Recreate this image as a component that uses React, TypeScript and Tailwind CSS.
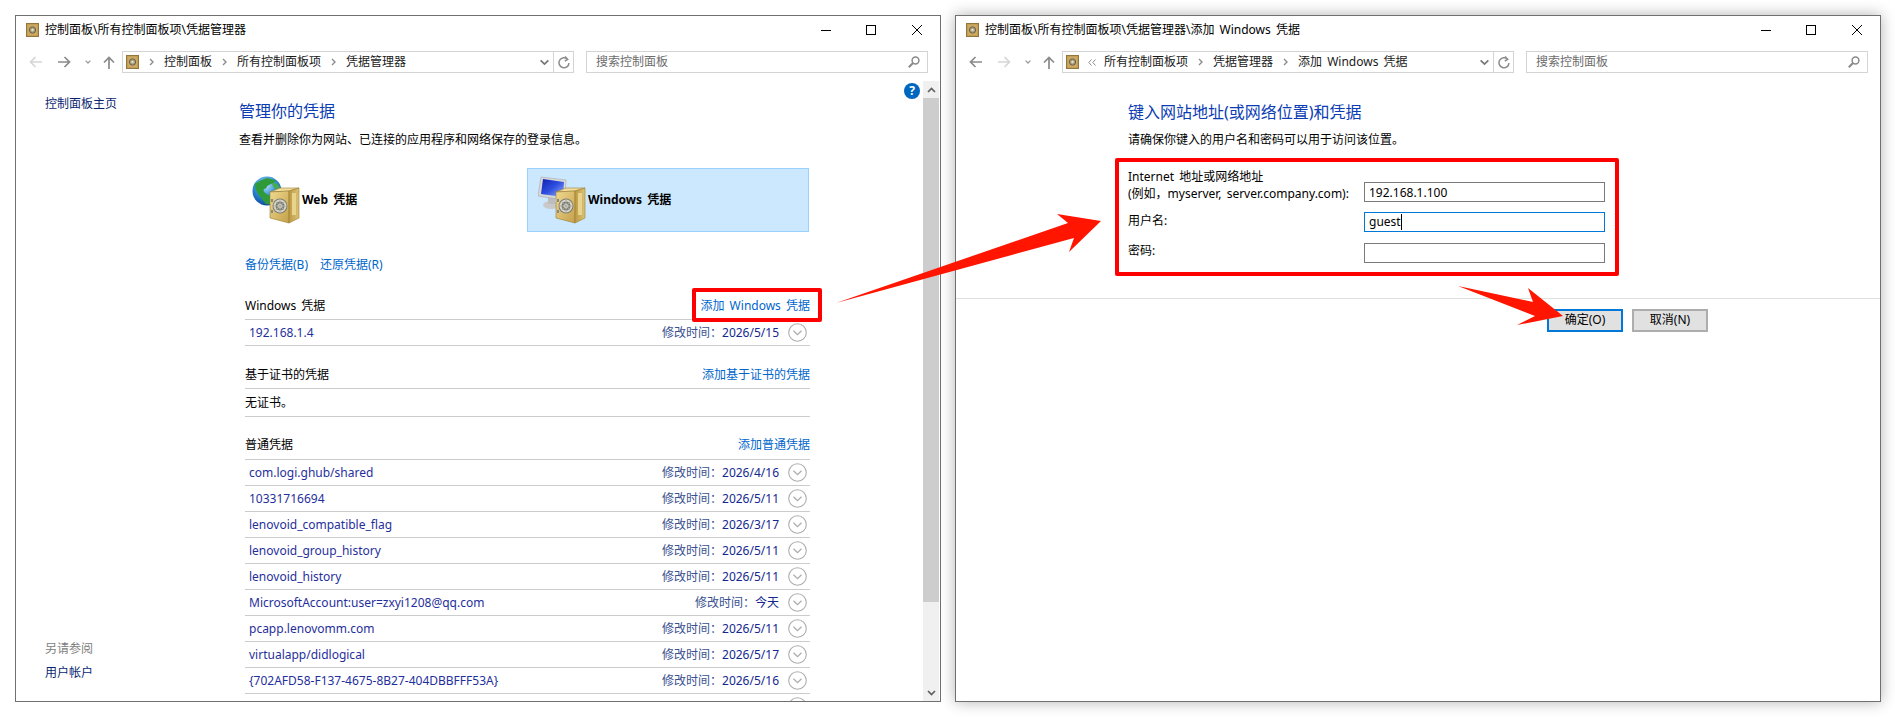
import React from "react";

const COLON = "\uFF1A";
const COMMA = "\uFF0C";

const rows: [string, string][] = [
  ["com.logi.ghub/shared", "2026/4/16"],
  ["10331716694", "2026/5/11"],
  ["lenovoid_compatible_flag", "2026/3/17"],
  ["lenovoid_group_history", "2026/5/11"],
  ["lenovoid_history", "2026/5/11"],
  ["MicrosoftAccount:user=zxyi1208@qq.com", "今天"],
  ["pcapp.lenovomm.com", "2026/5/11"],
  ["virtualapp/didlogical", "2026/5/17"],
  ["{702AFD58-F137-4675-8B27-404DBBFFF53A}", "2026/5/16"],
  ["", ""],
];

function SmallSafe() {
  return (
    <svg width="13" height="14" viewBox="0 0 13 14" className="shrink-0">
      <rect x="0.5" y="0.5" width="12" height="13" fill="#b8934a" stroke="#94763a" />
      <rect x="1.5" y="1.5" width="10" height="11" fill="#cdaa63" />
      <circle cx="6.5" cy="7" r="3.2" fill="#a89c78" stroke="#6e6446" />
      <circle cx="6.5" cy="7" r="1.2" fill="#e6e2d2" />
    </svg>
  );
}

function SafeBody() {
  return (
    <g>
      <polygon points="18,17 28,13 47,13 37,16" fill="#f2dfa0" stroke="#9a7c30" strokeWidth="0.6" />
      <polygon points="18,17 37,16 37,48 18,43" fill="url(#goldFront)" stroke="#9a7c30" strokeWidth="0.6" />
      <polygon points="37,16 47,13 47,43 37,48" fill="url(#goldSide)" stroke="#9a7c30" strokeWidth="0.6" />
      <rect x="40" y="18" width="4" height="22" fill="#e9d48d" />
      <circle cx="28" cy="31" r="7.5" fill="#7d7d72" />
      <circle cx="28" cy="31" r="5.5" fill="none" stroke="#d6d6cc" strokeWidth="2" />
      <circle cx="28" cy="31" r="2.5" fill="#d9d9d2" />
      <path d="M28 24v14M21 31h14M23 26l10 10M33 26l-10 10" stroke="#a9a99e" strokeWidth="0.8" />
      <rect x="19" y="24" width="2" height="3" fill="#888" />
      <rect x="19" y="35" width="2" height="3" fill="#888" />
    </g>
  );
}

function Defs() {
  return (
    <defs>
      <linearGradient id="goldFront" x1="0" y1="0" x2="1" y2="1">
        <stop offset="0" stopColor="#efd98f" />
        <stop offset="1" stopColor="#c4a04a" />
      </linearGradient>
      <linearGradient id="goldSide" x1="0" y1="0" x2="1" y2="0">
        <stop offset="0" stopColor="#bd9a44" />
        <stop offset="1" stopColor="#dcc274" />
      </linearGradient>
      <radialGradient id="globeFill" cx="0.45" cy="0.3" r="0.75">
        <stop offset="0" stopColor="#bfe6fa" />
        <stop offset="0.5" stopColor="#2f8fd6" />
        <stop offset="1" stopColor="#0c3f96" />
      </radialGradient>
      <linearGradient id="screenFill" x1="0" y1="0" x2="1" y2="1">
        <stop offset="0" stopColor="#0d1fb0" />
        <stop offset="0.5" stopColor="#2f4fe0" />
        <stop offset="1" stopColor="#9ab4f5" />
      </linearGradient>
    </defs>
  );
}

function WebIcon() {
  return (
    <svg width="48" height="50" viewBox="0 0 48 50" className="shrink-0 ml-[10px]">
      <Defs />
      <circle cx="15" cy="16" r="14.5" fill="url(#globeFill)" />
      <path d="M3 9c4-3 8-5 12-6 3 1 6 1 9 3-2 3-5 2-7 4-3 1-2 4-5 4-2 3 3 5 6 7 3 1 4 4 7 4-3 4-7 5-11 4-3-3-5-7-8-10-2-3-3-6-3-10z" fill="#2f9a3a" />
      <path d="M20 8c2 0 5 0 7 3 1 2 1 4 0 5-2-1-4-2-5-4-1-1-2-2-2-4z" fill="#45ad4c" />
      <SafeBody />
    </svg>
  );
}

function WinIcon() {
  return (
    <svg width="48" height="50" viewBox="0 0 48 50" className="shrink-0 ml-[10px]">
      <Defs />
      <ellipse cx="13" cy="30" rx="8" ry="4" fill="#c9c9c9" />
      <rect x="10" y="23" width="7" height="6" fill="#bdbdbd" />
      <polygon points="3,2 28,5 27,25 0,21" fill="#d8d8d8" stroke="#9c9c9c" strokeWidth="0.5" />
      <polygon points="5,4 26,7 25,22 3,19" fill="url(#screenFill)" />
      <SafeBody />
    </svg>
  );
}

function Back({ on }: { on: boolean }) {
  const c = on ? "#8a8a8a" : "#d6d6d6";
  return (
    <svg width="13" height="12" viewBox="0 0 13 12" fill="none" stroke={c} strokeWidth="1.7" className="shrink-0">
      <path d="M13 6H1.5M6.5 1L1.5 6l5 5" />
    </svg>
  );
}
function Forward({ on }: { on: boolean }) {
  const c = on ? "#8a8a8a" : "#d6d6d6";
  return (
    <svg width="13" height="12" viewBox="0 0 13 12" fill="none" stroke={c} strokeWidth="1.7" className="shrink-0">
      <path d="M0 6h11.5M6.5 1l5 5-5 5" />
    </svg>
  );
}
function Chevron({ w = 7, c = "#9a9a9a", sw = 1.5 }: { w?: number; c?: string; sw?: number }) {
  return (
    <svg width={w} height={w - 2} viewBox="0 0 7 5" fill="none" stroke={c} strokeWidth={sw} className="shrink-0">
      <path d="M0.5 0.8L3.5 3.8L6.5 0.8" />
    </svg>
  );
}

function NavGroup({ back, forward }: { back: boolean; forward: boolean }) {
  return (
    <div className="flex items-center pl-[13px] w-[106px] shrink-0">
      <Back on={back} />
      <div className="w-[16px]" />
      <Forward on={forward} />
      <div className="w-[14px]" />
      <Chevron w={6} />
      <div className="w-[12px]" />
      <svg width="12" height="13" viewBox="0 0 12 13" fill="none" stroke="#8a8a8a" strokeWidth="1.7" className="shrink-0">
        <path d="M6 13V1.5M1 6.5l5-5 5 5" />
      </svg>
    </div>
  );
}

function Sep() {
  return (
    <div className="w-[25px] flex justify-center shrink-0">
      <svg width="5" height="8" viewBox="0 0 5 8" fill="none" stroke="#8c8c8c" strokeWidth="1.4">
        <path d="M1 1l3 3-3 3" />
      </svg>
    </div>
  );
}

function DoubleSep() {
  return (
    <div className="w-[25px] flex justify-center shrink-0">
      <svg width="8" height="7" viewBox="0 0 8 7" fill="none" stroke="#8c8c8c" strokeWidth="1">
        <path d="M3.5 0.5L0.8 3.5l2.7 3M7.5 0.5L4.8 3.5l2.7 3" />
      </svg>
    </div>
  );
}

function Controls() {
  return (
    <div className="flex items-center pr-[18px]">
      <div className="w-[10px] h-px bg-black" />
      <div className="ml-[35px] w-[10px] h-[10px] border border-black" />
      <svg width="10" height="10" viewBox="0 0 10 10" stroke="#000" strokeWidth="1" fill="none" className="ml-[36px]">
        <path d="M0 0l10 10M10 0L0 10" />
      </svg>
    </div>
  );
}

function TopBars({ title, crumbs, first, back, forward }: { title: string; crumbs: string[]; first?: boolean; back: boolean; forward: boolean }) {
  return (
    <>
      <div className="h-[28px] flex items-center justify-between shrink-0">
        <div className="flex items-center gap-[6px] pl-[10px] text-[12px] text-black">
          <SmallSafe />
          <span>{title}</span>
        </div>
        <Controls />
      </div>
      <div className="mt-[7px] h-[22px] flex shrink-0">
        <NavGroup back={back} forward={forward} />
        <div className="w-[452px] h-[22px] border border-[#d4d4d4] flex items-center shrink-0">
          <div className="flex-1 flex items-center pl-[3px] text-[12px] text-[#1a1a1a]">
            <SmallSafe />
            {first ? <Sep /> : <DoubleSep />}
            {crumbs.map((c, i) => (
              <React.Fragment key={c}>
                {i > 0 && <Sep />}
                <span className="whitespace-nowrap">{c}</span>
              </React.Fragment>
            ))}
          </div>
          <div className="w-[18px] flex justify-center">
            <Chevron w={9} c="#777777" sw={1.3} />
          </div>
          <div className="w-[20px] h-full border-l border-[#d4d4d4] flex items-center justify-center">
            <svg width="12" height="13" viewBox="0 0 12 13" fill="none" stroke="#8c8c8c" strokeWidth="1.5">
              <path d="M9.5 3.2A5 5 0 1 0 11 7M7 0.5L9.7 3.3 6.8 5" />
            </svg>
          </div>
        </div>
        <div className="ml-[12px] w-[342px] h-[22px] border border-[#d4d4d4] flex items-center justify-between pl-[9px] pr-[7px] text-[12px] text-[#6d6d6d] shrink-0">
          <span>搜索控制面板</span>
          <svg width="12" height="12" viewBox="0 0 12 12" fill="none" stroke="#8a8a8a" strokeWidth="1.5">
            <circle cx="7.5" cy="4.5" r="3.4" />
            <path d="M5 7L0.8 11.2" strokeWidth="2" />
          </svg>
        </div>
      </div>
    </>
  );
}

function SectionHead({ title, action, mt, pb }: { title: string; action: string; mt: string; pb: string }) {
  return (
    <div className={`h-[25px] border-b border-[#cccccc] flex items-center justify-between text-[12px] ${mt} ${pb}`}>
      <span className="text-black">{title}</span>
      <span className="text-[#0066cc]">{action}</span>
    </div>
  );
}

function Row({ name, date }: { name: string; date: string }) {
  return (
    <div className="h-[26px] border-b border-[#cccccc] flex items-center justify-between pl-[4px] pr-[3px] text-[12px] shrink-0">
      <span className="text-[#1f2f9c] whitespace-nowrap">{name}</span>
      <div className="flex items-center">
        {date && <span className="text-[#39518f] whitespace-nowrap">{"修改时间" + COLON}</span>}
        {date && <span className="text-[#14288f] whitespace-nowrap">{date}</span>}
        <svg width="19" height="19" viewBox="0 0 19 19" fill="none" stroke="#adadad" strokeWidth="1.1" className="ml-[9px]">
          <circle cx="9.5" cy="9.5" r="8.8" />
          <path d="M5.5 7.8L9.5 11.6L13.5 7.8" strokeWidth="1.3" />
        </svg>
      </div>
    </div>
  );
}

function Scrollbar() {
  return (
    <div className="w-[16px] shrink-0 bg-[#f0f0f0] flex flex-col mr-px">
      <div className="h-[17px] flex items-center justify-center">
        <svg width="9" height="6" viewBox="0 0 9 6" fill="none" stroke="#606060" strokeWidth="1.7">
          <path d="M1 5l3.5-3.5L8 5" />
        </svg>
      </div>
      <div className="h-[504px] bg-[#cdcdcd]" />
      <div className="flex-1 flex items-end justify-center pb-[5px]">
        <svg width="9" height="6" viewBox="0 0 9 6" fill="none" stroke="#606060" strokeWidth="1.7">
          <path d="M1 1l3.5 3.5L8 1" />
        </svg>
      </div>
    </div>
  );
}

function Input({ children, focus }: { children?: React.ReactNode; focus?: boolean }) {
  return (
    <div className={`w-[241px] h-[20px] border flex items-center pl-[4px] text-[12px] text-black shrink-0 ${focus ? "border-[#0078d7]" : "border-[#7a7a7a]"}`}>
      {children}
    </div>
  );
}

export default function App() {
  return (
    <div className="relative w-[1895px] h-[717px] overflow-hidden bg-white [word-spacing:2px] font-['Noto_Sans','Noto_Sans_CJK_SC',sans-serif]">
      <div className="flex pt-[15px] pl-[15px] gap-[14px]">
        {/* left window */}
        <div className="w-[926px] h-[687px] border border-[#707070] bg-white flex flex-col shrink-0 overflow-hidden">
          <TopBars title="控制面板\所有控制面板项\凭据管理器" crumbs={["控制面板", "所有控制面板项", "凭据管理器"]} first back={false} forward />
          <div className="mt-[8px] flex-1 min-h-0 flex overflow-hidden">
            <div className="w-[223px] shrink-0 pl-[29px] flex flex-col justify-between pt-[15px] pb-[20px] text-[12px] leading-[16px]">
              <div className="text-[#0a1f70]">控制面板主页</div>
              <div>
                <div className="text-[#808080] mb-[8px]">另请参阅</div>
                <div className="text-[#0a1f70]">用户帐户</div>
              </div>
            </div>
            <div className="w-[571px] shrink-0 pt-[19px] flex flex-col overflow-hidden">
              <div className="text-[16px] leading-[22px] text-[#0b3cb4]">管理你的凭据</div>
              <div className="mt-[10px] text-[12px] leading-[16px] text-black">查看并删除你为网站、已连接的应用程序和网络保存的登录信息。</div>
              <div className="mt-[20px] ml-[2px] flex gap-[4px] shrink-0">
                <div className="w-[282px] h-[64px] flex items-center border border-transparent text-[12px] font-bold text-black">
                  <WebIcon />
                  <span className="ml-[2px]">Web 凭据</span>
                </div>
                <div className="w-[282px] h-[64px] flex items-center bg-[#cce8ff] border border-[#99d1ff] text-[12px] font-bold text-black">
                  <WinIcon />
                  <span className="ml-[2px]">Windows 凭据</span>
                </div>
              </div>
              <div className="mt-[25px] pl-[6px] flex gap-[12px] text-[12px] leading-[16px] text-[#0066cc]">
                <span>备份凭据(B)</span>
                <span>还原凭据(R)</span>
              </div>
              <div className="pl-[6px] flex flex-col">
                <SectionHead title="Windows 凭据" action="添加 Windows 凭据" mt="mt-[22px]" pb="pb-[2px]" />
                <Row name="192.168.1.4" date="2026/5/15" />
                <SectionHead title="基于证书的凭据" action="添加基于证书的凭据" mt="mt-[18px]" pb="pb-[2px]" />
                <div className="h-[28px] border-b border-[#cccccc] flex items-center text-[12px] text-black">无证书。</div>
                <SectionHead title="普通凭据" action="添加普通凭据" mt="mt-[18px]" pb="pb-[4px]" />
                {rows.map((r, i) => (
                  <Row key={i} name={r[0]} date={r[1]} />
                ))}
              </div>
            </div>
            <div className="flex-1 flex justify-end pr-[3px] pt-[2px]">
              <div className="w-[16px] h-[16px] rounded-full bg-[#0067c0] text-white text-[12px] font-bold leading-[16px] text-center">?</div>
            </div>
            <Scrollbar />
          </div>
        </div>

        {/* right window */}
        <div className="w-[926px] h-[687px] border border-[#707070] bg-white flex flex-col shrink-0 shadow-[0_0_14px_rgba(0,0,0,0.3)]">
          <TopBars title="控制面板\所有控制面板项\凭据管理器\添加 Windows 凭据" crumbs={["所有控制面板项", "凭据管理器", "添加 Windows 凭据"]} back forward={false} />
          <div className="mt-[8px] flex-1 min-h-0 flex flex-col">
            <div className="pl-[172px] pt-[20px]">
              <div className="text-[16px] leading-[22px] text-[#0b3cb4]">键入网站地址(或网络位置)和凭据</div>
              <div className="mt-[9px] text-[12px] leading-[16px] text-black">请确保你键入的用户名和密码可以用于访问该位置。</div>
              <div className="mt-[20px] flex items-end h-[34px] text-[12px] leading-[17px] text-black">
                <div className="w-[236px] shrink-0">
                  <div>Internet 地址或网络地址</div>
                  <div className="whitespace-nowrap">{"(例如" + COMMA + "myserver, server.company.com):"}</div>
                </div>
                <Input>192.168.1.100</Input>
              </div>
              <div className="mt-[10px] flex items-center text-[12px] text-black">
                <div className="w-[236px] shrink-0 pb-[2px]">用户名:</div>
                <Input focus>
                  <span className="border-r border-black leading-[16px]">guest</span>
                </Input>
              </div>
              <div className="mt-[10px] flex items-center text-[12px] text-black">
                <div className="w-[236px] shrink-0 pb-[3px]">密码:</div>
                <Input />
              </div>
            </div>
            <div className="mt-[35px] border-t border-[#dfdfdf]" />
            <div className="mt-[10px] pl-[591px] flex gap-[9px]">
              <div className="w-[76px] h-[23px] border-2 border-[#0078d7] bg-[#e1e1e1] flex items-center justify-center pb-px text-[12px] text-black">确定(O)</div>
              <div className="w-[76px] h-[23px] border-2 border-[#adadad] bg-[#e1e1e1] flex items-center justify-center pb-px text-[12px] text-black">取消(N)</div>
            </div>
          </div>
        </div>
      </div>

      {/* annotations */}
      <div className="absolute left-[692px] top-[288px] w-[130px] h-[34px] border-[4px] border-[#ff0000] rounded-[2px]" />
      <div className="absolute left-[1115px] top-[158px] w-[504px] h-[118px] border-[4px] border-[#ff0000] rounded-[2px]" />
      <svg className="absolute left-0 top-0 pointer-events-none" width="1895" height="717" viewBox="0 0 1895 717">
        <polygon points="836,303 1068,223 1057,214 1101,221 1069,252 1074,238" fill="#ff1500" />
        <polygon points="1458,286 1533,302 1528,288 1563,316 1517,325 1535,316" fill="#ff1500" />
      </svg>
    </div>
  );
}
